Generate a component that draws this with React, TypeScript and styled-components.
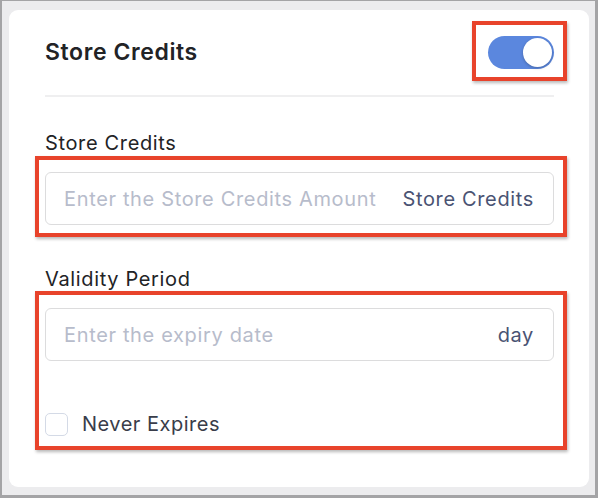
import React from "react";
import styled, { createGlobalStyle } from "styled-components";

const GlobalStyle = createGlobalStyle`
  html, body { margin: 0; padding: 0; }
  body { font-family: Inter, "Noto Sans", sans-serif; -webkit-font-smoothing: antialiased; }
  * { box-sizing: border-box; }
`;

const Frame = styled.div`
  width: 598px;
  height: 498px;
  background: #ececee;
  border-style: solid;
  border-color: #a4a4a6;
  border-width: 1px 3px 3px 2px;
  padding: 9px 6px 8px 7px;
  display: flex;
`;

const Card = styled.div`
  flex: 1;
  background: #ffffff;
  border-radius: 9px;
  padding: 26px 35px 0 36px;
  display: flex;
  flex-direction: column;
`;

const Header = styled.div`
  display: flex;
  align-items: center;
  justify-content: space-between;
  padding-bottom: 26px;
  border-bottom: 2px solid #efeff0;
`;

const Title = styled.h2`
  margin: 0;
  font-size: 23px;
  line-height: 33px;
  font-weight: 600;
  letter-spacing: 0.6px;
  color: #222326;
`;

type Insets = { t: number; r: number; b: number; l: number };

const Highlight = styled.div<{ $in: Insets }>`
  position: relative;
  display: flex;
  flex-direction: column;
  &::after {
    content: "";
    position: absolute;
    pointer-events: none;
    top: ${(p) => -p.$in.t}px;
    right: ${(p) => -p.$in.r}px;
    bottom: ${(p) => -p.$in.b}px;
    left: ${(p) => -p.$in.l}px;
    border: 4px solid #e8432b;
    box-shadow: 1px 2px 3px rgba(0, 0, 0, 0.28);
  }
`;

const Toggle = styled.button<{ $on: boolean }>`
  width: 66px;
  height: 33px;
  border-radius: 17px;
  border: none;
  padding: 0 2px;
  background: ${(p) => (p.$on ? "#5b87de" : "#d5d8de")};
  display: flex;
  align-items: center;
  justify-content: ${(p) => (p.$on ? "flex-end" : "flex-start")};
  cursor: pointer;
`;

const Knob = styled.span`
  width: 29px;
  height: 29px;
  border-radius: 50%;
  background: #ffffff;
  box-shadow: 0 1px 3px rgba(0, 0, 0, 0.25);
`;

const Label = styled.label<{ $top: number }>`
  display: block;
  margin-top: ${(p) => p.$top}px;
  margin-bottom: 17px;
  font-size: 20px;
  line-height: 24px;
  font-weight: 400;
  letter-spacing: 0.65px;
  color: #222326;
`;

const InputBox = styled.div`
  height: 53px;
  border: 1.5px solid #dcdcdd;
  border-radius: 6px;
  display: flex;
  align-items: center;
  padding: 0 19px 0 18px;
  gap: 16px;
`;

const TextInput = styled.input`
  flex: 1;
  min-width: 0;
  border: none;
  outline: none;
  background: transparent;
  font-family: inherit;
  font-size: 20px;
  letter-spacing: 0.65px;
  color: #222326;
  padding: 0;
  &::placeholder {
    color: #b7bccb;
  }
`;

const Suffix = styled.span`
  font-size: 20px;
  letter-spacing: 0.65px;
  color: #4a5373;
  white-space: nowrap;
`;

const CheckRow = styled.label`
  display: flex;
  align-items: center;
  gap: 14px;
  margin-top: 51px;
  font-size: 20px;
  letter-spacing: 0.5px;
  color: #393d4a;
  line-height: 24px;
`;

const Checkbox = styled.input`
  appearance: none;
  margin: 0;
  width: 23px;
  height: 23px;
  border: 1.5px solid #d4dae6;
  border-radius: 5px;
  background: #fff;
`;

export default function App() {
  return (
    <>
      <GlobalStyle />
      <Frame>
        <Card>
          <Header>
            <Title>Store Credits</Title>
            <Highlight $in={{ t: 15, r: 13, b: 12, l: 16 }}>
              <Toggle $on aria-label="Store Credits enabled">
                <Knob />
              </Toggle>
            </Highlight>
          </Header>

          <Label $top={34}>Store Credits</Label>
          <Highlight $in={{ t: 16, r: 13, b: 12, l: 10 }}>
            <InputBox>
              <TextInput placeholder="Enter the Store Credits Amount" />
              <Suffix>Store Credits</Suffix>
            </InputBox>
          </Highlight>

          <Label $top={42}>Validity Period</Label>
          <Highlight $in={{ t: 17, r: 13, b: 14, l: 10 }}>
            <InputBox>
              <TextInput placeholder="Enter the expiry date" />
              <Suffix>day</Suffix>
            </InputBox>
            <CheckRow>
              <Checkbox type="checkbox" />
              Never Expires
            </CheckRow>
          </Highlight>
        </Card>
      </Frame>
    </>
  );
}
